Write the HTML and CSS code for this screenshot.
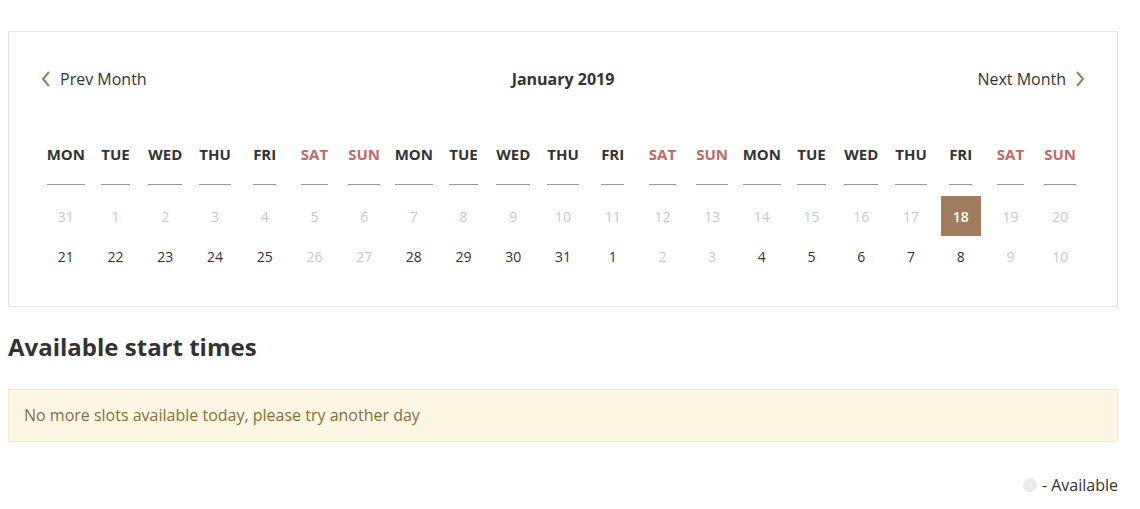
FILE: index.html
```html
<!DOCTYPE html>
<html>
<head>
<meta charset="utf-8">
<link rel="stylesheet" href="styles.css">
</head>
<body>
<div class="page">
  <div class="calendar">
    <div class="nav">
      <a class="nav-link prev"><svg width="10" height="16" viewBox="0 0 10 16"><polyline points="8,1 2,8 8,15" fill="none" stroke="#a07d5e" stroke-width="2"/></svg><span>Prev Month</span></a>
      <div class="month">January 2019</div>
      <a class="nav-link next"><span>Next Month</span><svg width="10" height="16" viewBox="0 0 10 16"><polyline points="2,1 8,8 2,15" fill="none" stroke="#a07d5e" stroke-width="2"/></svg></a>
    </div>
    <div class="grid">
      <div class="dh"><span>MON</span></div><div class="dh"><span>TUE</span></div><div class="dh"><span>WED</span></div><div class="dh"><span>THU</span></div><div class="dh"><span>FRI</span></div><div class="dh we"><span>SAT</span></div><div class="dh we"><span>SUN</span></div>
      <div class="dh"><span>MON</span></div><div class="dh"><span>TUE</span></div><div class="dh"><span>WED</span></div><div class="dh"><span>THU</span></div><div class="dh"><span>FRI</span></div><div class="dh we"><span>SAT</span></div><div class="dh we"><span>SUN</span></div>
      <div class="dh"><span>MON</span></div><div class="dh"><span>TUE</span></div><div class="dh"><span>WED</span></div><div class="dh"><span>THU</span></div><div class="dh"><span>FRI</span></div><div class="dh we"><span>SAT</span></div><div class="dh we"><span>SUN</span></div>

      <div class="d off">31</div><div class="d off">1</div><div class="d off">2</div><div class="d off">3</div><div class="d off">4</div><div class="d off">5</div><div class="d off">6</div>
      <div class="d off">7</div><div class="d off">8</div><div class="d off">9</div><div class="d off">10</div><div class="d off">11</div><div class="d off">12</div><div class="d off">13</div>
      <div class="d off">14</div><div class="d off">15</div><div class="d off">16</div><div class="d off">17</div><div class="d sel"><span>18</span></div><div class="d off">19</div><div class="d off">20</div>

      <div class="d">21</div><div class="d">22</div><div class="d">23</div><div class="d">24</div><div class="d">25</div><div class="d off">26</div><div class="d off">27</div>
      <div class="d">28</div><div class="d">29</div><div class="d">30</div><div class="d">31</div><div class="d">1</div><div class="d off">2</div><div class="d off">3</div>
      <div class="d">4</div><div class="d">5</div><div class="d">6</div><div class="d">7</div><div class="d">8</div><div class="d off">9</div><div class="d off">10</div>
    </div>
  </div>

  <h2 class="title">Available start times</h2>
  <div class="alert">No more slots available today, please try another day</div>
  <div class="legend"><span class="dot"></span><span>- Available</span></div>
</div>
</body>
</html>
```
FILE: styles.css
```css
html, body {
  margin: 0;
  padding: 0;
  background: #fff;
}
body {
  font-family: "Open Sans", "Liberation Sans", sans-serif;
  color: #333;
  padding: 31px 22px 0 8px;
}
.page {
  width: 1110px;
}
.calendar {
  border: 1px solid #e3e3e3;
  padding: 31px 32px 30px 32px;
}
.nav {
  display: flex;
  align-items: center;
  justify-content: space-between;
  height: 32px;
  font-size: 16px;
  color: #333;
}
.nav-link {
  display: flex;
  align-items: center;
  gap: 9px;
}
.month {
  font-weight: 700;
  font-size: 16px;
  margin-left: 2px;
}
.grid {
  margin-top: 49px;
  display: grid;
  grid-template-columns: repeat(21, 1fr);
  width: 1044px;
}
.dh {
  text-align: center;
  font-weight: 700;
  font-size: 15px;
  line-height: 20px;
  color: #333;
  padding-bottom: 11px;
}
.dh span {
  display: inline-block;
  padding-bottom: 20px;
  border-bottom: 1px solid #999;
}
.dh.we {
  color: #c36868;
}
.d {
  height: 40px;
  display: flex;
  align-items: center;
  justify-content: center;
  font-size: 14px;
  color: #333;
}
.d.off {
  color: #c8c8d2;
}
.d.sel span {
  width: 40px;
  height: 40px;
  background: #a07d5e;
  color: #fff;
  font-weight: 600;
  display: flex;
  align-items: center;
  justify-content: center;
}
.title {
  margin: 26px 0 0 0;
  font-size: 24px;
  font-weight: 700;
  line-height: 28px;
  color: #333;
}
.alert {
  margin-top: 28px;
  padding: 15px;
  background: #fcf7e3;
  border: 1px solid #f7e9c9;
  color: #8a6d3b;
  font-size: 16px;
  line-height: 21px;
}
.legend {
  margin-top: 32px;
  display: flex;
  justify-content: flex-end;
  align-items: center;
  gap: 5px;
  font-size: 16px;
  color: #333;
}
.dot {
  width: 14px;
  height: 14px;
  border-radius: 50%;
  background: #ebebeb;
}
```
